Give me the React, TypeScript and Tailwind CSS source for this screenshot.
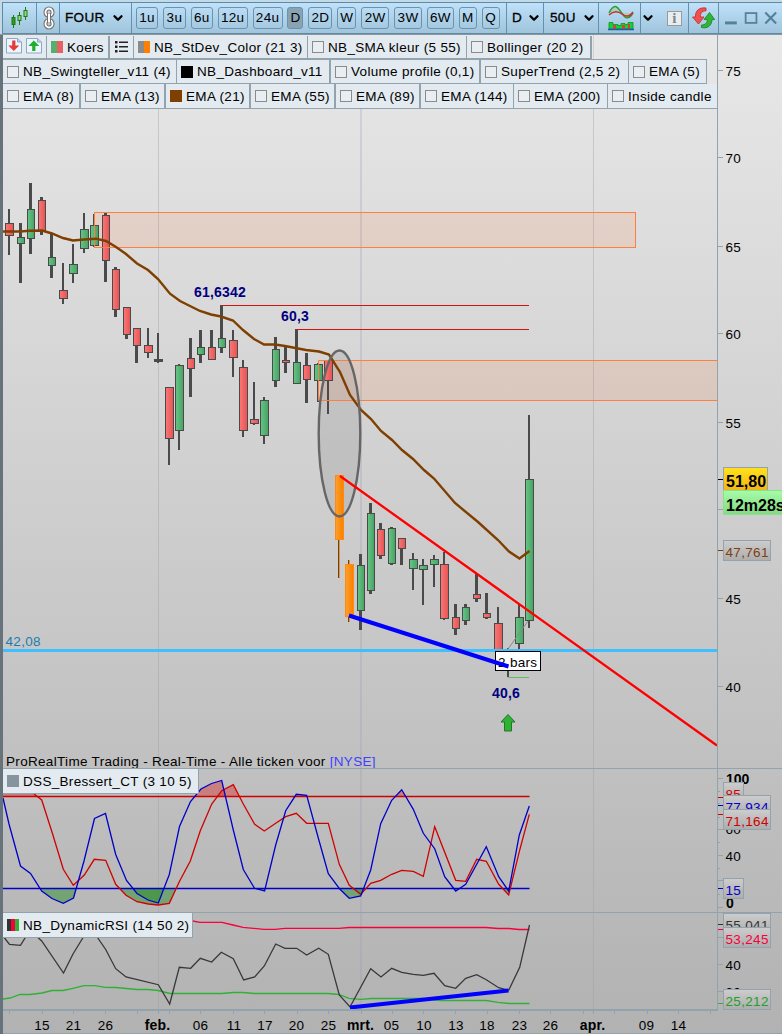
import { ChevronDown } from 'lucide-react';
import type { ReactNode } from 'react';

type Kind = 'up' | 'down' | 'alert' | 'flat';

// bodyX, bodyW, wickX, wickW, high, low, open/close top, open/close bottom, kind
type Candle = [number, number, number, number, number, number, number, number, Kind];

const candles: Candle[] = [
  [5, 9, 8, 2, 209, 255, 223, 236, 'down'],
  [17, 8, 19, 3, 223, 283, 237, 244, 'up'],
  [27, 8, 29, 3, 183, 254, 209, 239, 'up'],
  [38, 8, 40, 3, 197, 235, 200, 232, 'down'],
  [48, 8, 50, 3, 233, 278, 257, 266, 'up'],
  [59, 9, 62, 2, 263, 304, 290, 299, 'down'],
  [69, 9, 72, 2, 244, 283, 264, 274, 'up'],
  [80, 9, 83, 2, 213, 253, 229, 249, 'up'],
  [90, 9, 93, 1, 214, 247, 225, 246, 'up'],
  [102, 8, 104, 3, 213, 282, 215, 261, 'down'],
  [112, 8, 114, 3, 267, 317, 269, 310, 'down'],
  [123, 8, 125, 3, 307, 339, 307, 335, 'down'],
  [133, 8, 135, 3, 328, 363, 328, 346, 'down'],
  [144, 9, 147, 2, 328, 358, 345, 353, 'down'],
  [154, 9, 157, 2, 333, 363, 359, 362, 'flat'],
  [165, 9, 168, 2, 387, 465, 387, 439, 'down'],
  [175, 9, 178, 2, 364, 450, 365, 431, 'up'],
  [187, 8, 189, 3, 338, 397, 358, 369, 'down'],
  [197, 8, 199, 3, 330, 363, 347, 355, 'up'],
  [208, 8, 210, 3, 330, 360, 347, 360, 'down'],
  [218, 8, 220, 3, 305, 353, 338, 348, 'up'],
  [229, 9, 232, 2, 330, 377, 340, 358, 'down'],
  [239, 9, 242, 2, 360, 437, 367, 431, 'down'],
  [250, 9, 253, 2, 382, 425, 419, 424, 'down'],
  [260, 9, 263, 2, 397, 444, 400, 436, 'up'],
  [272, 8, 274, 3, 337, 387, 349, 381, 'up'],
  [282, 8, 284, 3, 347, 373, 360, 363, 'down'],
  [293, 8, 295, 3, 329, 384, 362, 384, 'up'],
  [303, 8, 305, 3, 353, 403, 365, 380, 'down'],
  [314, 9, 317, 2, 363, 402, 364, 381, 'up'],
  [324, 9, 327, 2, 361, 414, 360, 381, 'down'],
  [335, 9, 338, 2, 475, 578, 475, 540, 'alert'],
  [345, 9, 348, 2, 560, 622, 564, 617, 'alert'],
  [357, 8, 359, 3, 554, 630, 565, 611, 'up'],
  [367, 8, 369, 3, 503, 594, 513, 591, 'up'],
  [377, 8, 379, 3, 523, 559, 529, 556, 'down'],
  [388, 8, 390, 3, 527, 565, 528, 564, 'up'],
  [398, 8, 400, 3, 538, 565, 538, 549, 'down'],
  [409, 9, 412, 2, 553, 590, 559, 569, 'up'],
  [419, 9, 422, 2, 559, 605, 565, 570, 'up'],
  [430, 9, 433, 2, 555, 587, 559, 565, 'up'],
  [440, 9, 443, 2, 552, 620, 564, 619, 'down'],
  [452, 8, 454, 3, 604, 635, 617, 629, 'down'],
  [462, 8, 464, 3, 604, 625, 607, 621, 'up'],
  [473, 8, 475, 3, 573, 602, 594, 599, 'down'],
  [483, 8, 485, 3, 593, 619, 613, 618, 'down'],
  [494, 9, 497, 2, 607, 654, 623, 651, 'down'],
  [505, 8, 507, 2, 648, 677, 654, 664, 'up'],
  [515, 9, 518, 2, 604, 649, 617, 644, 'up'],
  [525, 9, 528, 2, 415, 628, 479, 621, 'up'],
];

const ema21 =
  '3,231.5 20,231.5 30,230.7 42,230.5 52,233.5 63,238 73,240.5 84,239.5 96,238.7 106,241 116,247 126,254 137,263.5 148,270 158,279 170,293.7 180,301 190,306 200,311 211,314.5 221,316.5 233,320.5 243,330 254,339 264,344.5 275,344.5 285,346 306,350 319,351.5 329,354.5 340,372 350,395 361,410 371,419 381,431 392,440 402,450 413,459 424,470 434,478.5 455,503 478,522 498,540 509,551.5 519.5,558.5 529.5,551';

const dssFast =
  '3,798 9,824 20.5,866 30.5,873.5 41.7,891 52,898.5 63.3,903.3 73.5,898 84,861 94.5,818.5 105.5,813.5 115.7,854.5 126.5,880.5 137,893.5 148,900 158.3,903 169.3,874.5 179.5,826.5 190.5,801.5 201,789 211.5,783.5 221.7,780.5 233.3,830 243.3,869.5 254.5,888.3 264.6,891 275.7,845 285.7,810.7 296.3,794.3 306.7,795.3 318.3,838 328.3,873.7 340,889.3 349.3,898.3 360.7,896 370.7,870 380.7,823.7 391.7,800.3 401.7,789.7 413.3,809.3 423.3,833.3 434.7,848.7 444.7,876.7 455.7,891 465.7,884.3 486.3,846.7 498.7,876.7 508.7,891 519.3,835 529.3,806';

const dssSlow =
  '3,788 20,788 33.3,793.3 41.7,800 52.3,833 63.3,869.3 73.3,885.3 84.3,875 94.3,859.3 105.7,860.3 115.7,884.3 126,895.3 137,901.7 148.3,904 158.3,905 169.3,903.3 179.3,881.7 190.3,861 200.3,830.7 211.7,804 221.7,790.7 233.3,784.7 243.3,804 254.7,824.3 264.3,831 275.7,823.3 285.7,816.7 296.3,813.3 306.7,823.3 328.3,823.3 339.3,864.3 349.3,885.3 360.7,894.3 370.7,883.3 380.7,880.3 391.7,874.3 401.7,870.3 413.3,871.3 423.3,876.3 434.7,826.7 455.7,880.3 465.7,881.3 476.7,859.3 486.3,861.3 498.7,884.3 508.7,895 519.3,851.7 529.3,814.3';

const rsi =
  '3,936 9.5,944.3 20.5,945.3 30,930 41.7,941 63.5,973 73,954 84,936 95,934 105.7,949.5 115.7,968.7 126,977 158.3,984.7 169.7,1004 179.3,967.3 190.7,968.3 200.3,958.3 211.7,962 221.3,952.3 233.3,958.7 243.7,980 254.7,977 264.3,966 275.7,944 285,948.3 296.7,948.3 306.7,955 318.7,948.3 328.3,954.3 339.3,995 350,1007 370.7,968.7 381,977 391.7,968.3 401.7,972.3 413.3,974.3 423.3,975.3 434,973.3 444.7,985.7 455.7,988.3 465.7,978.3 476.7,974.7 486.3,979.7 498.7,987.7 508.7,990.3 519.7,967.3 529.5,925';

const rsiUpper =
  '190,920.5 200,922.3 222,922.3 233,925 243,927.3 264,929.3 275,929.3 285,928.4 339,928.4 349,927.5 486,927.5 498,928.5 509,928.5 519,929.5 529.5,929.5';

const rsiLower =
  '3,999 10,998 20,994.5 30,994.5 42,993 52,990.5 63,990.5 73,988.3 84,985.7 95,985.7 105,987.3 116,987.5 137,989.5 148,989.5 158,990.5 170,993.5 222,993.5 233,992.5 243,992.5 254,993.5 328,993.5 339,994.5 349,998.3 361,999.3 371,998.5 423,998.5 440,1000.5 486,1000.5 498,1002.3 509,1003.5 529.5,1003.5';

const bodyFill: Record<Kind, string> = {
  up: 'url(#up)',
  down: 'url(#down)',
  alert: 'url(#alert)',
  flat: '#4a4a4a',
};

const timeframes: [string, string][] = [
  ['1u', 'w-[22px]'],
  ['3u', 'w-[23px]'],
  ['6u', 'w-[22px]'],
  ['12u', 'w-[30px]'],
  ['24u', 'w-[30px]'],
  ['D', 'w-[16px]'],
  ['2D', 'w-[24px]'],
  ['W', 'w-[19px]'],
  ['2W', 'w-[28px]'],
  ['3W', 'w-[28px]'],
  ['6W', 'w-[27px]'],
  ['M', 'w-[18px]'],
  ['Q', 'w-[18px]'],
];

const priceTicks: [string, number][] = [
  ['75', 71],
  ['70', 158],
  ['65', 247],
  ['60', 334],
  ['55', 423],
  ['50', 510],
  ['45', 599],
  ['40', 687],
];

const dates: [string, number][] = [
  ['15', 42],
  ['21', 73.5],
  ['26', 105.5],
  ['feb.', 157.5],
  ['06', 200.5],
  ['11', 234],
  ['17', 265],
  ['20', 296.5],
  ['25', 328.5],
  ['mrt.', 360.5],
  ['05', 391.5],
  ['10', 424],
  ['13', 456],
  ['18', 487],
  ['23', 519.5],
  ['26', 550.5],
  ['apr.', 592.5],
  ['09', 646.5],
  ['14', 678.5],
];

const dateTicks = [
  9, 42, 73, 105, 137, 158, 169, 200, 233, 264, 297, 328, 361, 392, 423, 455, 487, 519, 550, 583, 593, 614, 647, 678,
  710,
];

function Swatch({ colors }: { colors?: string[] }) {
  if (!colors) return <span className="h-3 w-3 shrink-0 border border-[#8b8b8b] bg-[#e9eef2]" />;
  return (
    <span className="flex h-3 w-3 shrink-0">
      {colors.map((c) => (
        <span key={c} className={`h-full flex-1 ${c}`} />
      ))}
    </span>
  );
}

function Tag({ label, width, colors }: { label: string; width: string; colors?: string[] }) {
  return (
    <div className={`flex shrink-0 items-center gap-1 border-r border-[#93a3ad] bg-[#e3ebf1] pl-1 ${width}`}>
      <Swatch colors={colors} />
      <span className="pt-px whitespace-nowrap">{label}</span>
    </div>
  );
}

function Cell({ width, children }: { width: string; children?: ReactNode }) {
  return <div className={`flex h-full shrink-0 items-center border-r border-[#6290ad] ${width}`}>{children}</div>;
}

function Caret({ className }: { className?: string }) {
  return <ChevronDown className={className} size={14} strokeWidth={4} />;
}

function PageIcon({ color, up }: { color: string; up?: boolean }) {
  return (
    <svg width="16" height="16" viewBox="0 0 16 16">
      <path d="M.5.5h11l4 3.5v11H.5z" fill="#eef5fb" stroke="#8aa9c8" />
      <path d="M11.5.5v3.5h4" fill="#b9cfe4" stroke="#8aa9c8" />
      <path
        d="M6.2 2.5h3.2v5h3.8L7.8 13 2.3 7.5h3.9z"
        fill={color}
        transform={up ? 'rotate(180 7.8 7.8)' : undefined}
      />
    </svg>
  );
}

function Toolbar() {
  return (
    <header className="flex h-8 items-center border-y border-l border-[#5f8aa6] bg-linear-to-b from-[#bfe1fa] to-[#9fc4dc]">
      <Cell width="w-[34px]">
        <svg className="ml-[7px]" width="20" height="22" viewBox="0 0 20 22">
          <g stroke="#1f7a12" fill="#2f9a1c">
            <path d="M3.5 8v13M9.5 5v13M15.5 0v13" />
            <rect x="2" y="10.5" width="3" height="7" />
            <rect x="8" y="8.5" width="3" height="5" fill="#8fdc80" />
            <rect x="14" y="3.5" width="3" height="6" fill="#8fdc80" />
          </g>
        </svg>
      </Cell>
      <Cell width="w-[23px]">
        <svg className="ml-[6px]" width="12" height="24" viewBox="0 0 12 24" fill="none">
          <g stroke="#77716d" strokeWidth="4">
            <rect x="2.5" y="2.5" width="7" height="7.5" rx="3.5" />
            <rect x="2.5" y="14" width="7" height="7.5" rx="3.5" />
          </g>
          <g stroke="#fff" strokeWidth="1.8">
            <rect x="2.5" y="2.5" width="7" height="7.5" rx="3.5" />
            <rect x="2.5" y="14" width="7" height="7.5" rx="3.5" />
          </g>
          <path d="M6 7v10" stroke="#77716d" strokeWidth="4" />
          <path d="M6 7.5v9" stroke="#fff" strokeWidth="2" />
        </svg>
      </Cell>
      <Cell width="w-[72px]">
        <span className="ml-[5px] [-webkit-text-stroke:0.3px]">FOUR</span>
        <Caret className="ml-[6px]" />
      </Cell>
      <div className="flex w-[374px] shrink-0 items-center gap-[4.9px] pl-[4px]">
        {timeframes.map(([label, width]) => (
          <button
            key={label}
            className={`flex h-[22px] shrink-0 items-center justify-center rounded-[3px] border border-[#6b93ae] ${width} ${
              label === 'D' ? 'bg-[#8aa3b3]' : ''
            }`}
          >
            {label}
          </button>
        ))}
      </div>
      <div className="flex h-full w-[38px] shrink-0 items-center border-x border-[#6290ad]">
        <span className="ml-[5px] [-webkit-text-stroke:0.3px]">D</span>
        <Caret className="ml-[5px]" />
      </div>
      <Cell width="w-[55px]">
        <span className="ml-[6px] [-webkit-text-stroke:0.3px]">50U</span>
        <Caret className="ml-[6px]" />
      </Cell>
      <Cell width="w-[42px]">
        <svg className="ml-[9px]" width="26" height="26" viewBox="0 0 26 26" fill="none">
          <path d="M1 8C6-2 9 1 13 7s7 9 12 1" fill="#a9d3b8" stroke="#2a9d3c" strokeWidth="1.5" />
          <path d="M1 10c5-5 9-4 13-1s8 3 11-2" stroke="#c92f35" strokeWidth="1.5" />
          <path d="M1 24V17.5h4v2h5v1h3v-2h4v1h3v-2h5V24z" fill="#0bd82c" stroke="#119022" strokeWidth=".8" />
          <path d="M5 20h3v4H5zM14 20h3v4h-3zM20 19h2v5h-2z" fill="#e33b3b" />
          <path d="M0 24.5h26" stroke="#1e58b8" strokeWidth="1.5" />
        </svg>
      </Cell>
      <Cell width="w-[48px]">
        <Caret />
        <span className="ml-[12px] flex h-[15px] w-[15px] items-center justify-center border border-[#9a9a9a] bg-[#e8edf0] font-['Liberation_Serif',serif] text-[15px] leading-none font-bold text-[#7e868c]">
          i
        </span>
      </Cell>
      <Cell width="w-[30px]">
        <svg className="ml-[3px]" width="23" height="22" viewBox="0 0 23 22">
          <path d="M14 1C7 0 3 4 3.5 10H.5l6 7 5.5-7H8.500C8 6.500 10 4 14 3.800z" fill="#f2504e" stroke="#c22b2b" strokeWidth=".8" />
          <path d="M9.500 20.500c6 1.500 10.500-2 10.500-8h2.700L17.500 5.500 12 12.500h3.200c.3 3-1.700 5.500-5.700 5.500z" fill="#2fb636" stroke="#18801f" strokeWidth=".8" />
        </svg>
      </Cell>
      <svg className="ml-[6px]" width="58" height="18" viewBox="0 0 58 18" fill="none" stroke="#55809b" strokeWidth="2.2">
        <path d="M0 14h12" strokeWidth="3" />
        <rect x="21" y="4" width="11" height="10" strokeWidth="1.8" />
        <path d="M41 3.5l11 11M52 3.5l-11 11" />
      </svg>
    </header>
  );
}

function IndicatorTags() {
  return (
    <div className="absolute top-[1px] left-[3px] flex flex-col">
      <div className="flex h-[23px] w-fit border-r border-b border-[#93a3ad]">
        <div className="flex w-[44px] gap-1 border-r border-[#93a3ad] bg-[#e3ebf1] pt-[2px] pl-[3px]">
          <PageIcon color="#e63b3b" />
          <PageIcon color="#22ad2c" up />
        </div>
        <Tag label="Koers" width="w-[63px] border-r-2" colors={['bg-[#55b070]', 'bg-[#ea6060]']} />
        <div className="flex w-[24px] items-center border-r border-[#93a3ad] bg-[#e3ebf1] pl-[5px]">
          <svg width="13" height="12" viewBox="0 0 13 12" fill="#222">
            <path d="M0 0h2.5v2.5H0zM0 4.5h2.5V7H0zM0 9h2.5v2.5H0zM4 .5h9V2H4zM4 5h9v1.5H4zM4 9.5h9V11H4z" />
          </svg>
        </div>
        <Tag label="NB_StDev_Color (21 3)" width="w-[174px]" colors={['bg-[#8b8b8b]', 'bg-[#ff7f00]']} />
        <Tag label="NB_SMA kleur (5 55)" width="w-[159px]" />
        <Tag label="Bollinger (20 2)" width="w-[124px]" />
      </div>
      <div className="flex h-[25px] w-fit border-y border-[#93a3ad]">
        <Tag label="NB_Swingteller_v11 (4)" width="w-[174px]" />
        <Tag label="NB_Dashboard_v11" width="w-[154px] border-r-2" colors={['bg-black']} />
        <Tag label="Volume profile (0,1)" width="w-[150px] border-r-2" />
        <Tag label="SuperTrend (2,5 2)" width="w-[148px]" />
        <Tag label="EMA (5)" width="w-[78px]" />
      </div>
      <div className="flex h-[25px] w-fit border-b border-[#93a3ad]">
        <Tag label="EMA (8)" width="w-[78px] border-r-2" />
        <Tag label="EMA (13)" width="w-[85px] border-r-2" />
        <Tag label="EMA (21)" width="w-[85px] border-r-2" colors={['bg-[#7f3f00]']} />
        <Tag label="EMA (55)" width="w-[85px] border-r-2" />
        <Tag label="EMA (89)" width="w-[85px] border-r-2" />
        <Tag label="EMA (144)" width="w-[93px]" />
        <Tag label="EMA (200)" width="w-[94px]" />
        <Tag label="Inside candle" width="w-[110px]" />
      </div>
    </div>
  );
}

function Candles() {
  return (
    <g shapeRendering="crispEdges">
      {candles.map(([x, w, wx, ww, high, low, top, bottom, kind]) => (
        <g key={x}>
          <rect x={wx} y={high} width={ww} height={low - high} fill="#4a4a4a" />
          {kind === 'alert' && <rect x={wx + 1} y={high} width={1} height={low - high} fill="#ff8a10" />}
          <rect
            x={x + 0.5}
            y={top + 0.5}
            width={w - 1}
            height={bottom - top - 1}
            fill={bodyFill[kind]}
            stroke={kind === 'alert' ? '#ff8a10' : '#4a4a4a'}
          />
        </g>
      ))}
    </g>
  );
}

function ValueBox({ y, text, color, w = 48 }: { y: number; text: string; color: string; w?: number }) {
  return (
    <g>
      <rect x="723.5" y={y + 0.5} width={w - 1} height={20} fill="url(#box)" stroke="#93a3ad" />
      <text x="725.5" y={y + 17} fill={color}>
        {text}
      </text>
    </g>
  );
}

function Axis() {
  return (
    <g>
      <path d="M717.5 35V1010" stroke="#93a3ab" />
      <path d="M3 768.5H782M3 912.5H782M3 1033.5H782" stroke="#93a3ab" />
      <path d="M3 1010H718" stroke="#93a3ab" strokeWidth="2" />
      {priceTicks.map(([label, y]) => (
        <g key={label}>
          <path d={`M718 ${y - 0.5}h5`} stroke="#93a3ab" />
          <text x="725.5" y={y + 5}>
            {label}
          </text>
        </g>
      ))}
      <path
        d="M718 778.5h5M718 829.5h5M718 855.5h5M718 880.5h5M718 907.5h5M718 791.5h2M718 803.5h2M718 817.5h2M718 842.5h2M718 868.5h2M718 894.5h2M718 937.5h5M718 964.5h5M718 991.5h5"
        stroke="#93a3ab"
      />
      <path d="M718 479.5h5" stroke="#000" />
      <path d="M718 550.5h5" stroke="#7f3f00" />
      <path d="M718 797.5h5M718 814.5h5" stroke="#d00000" />
      <path d="M718 805.5h5M718 888.5h5" stroke="#0000c8" />
      <path d="M718 924.5h5" stroke="#333" />
      <path d="M718 929.5h5" stroke="#f8003c" />
      <path d="M718 1003.5h5" stroke="#2eb135" />

      <rect x="723.5" y="467.5" width="44" height="24" fill="url(#last)" stroke="#93a3ad" />
      <text x="726" y="487" className="text-[16px] font-bold tracking-normal">
        51,80
      </text>
      <rect x="723.5" y="490.5" width="62" height="24" fill="url(#timer)" stroke="#8be08b" />
      <text x="726" y="511" className="text-[16px] font-bold tracking-normal">
        12m28s
      </text>
      <ValueBox y={540} text="47,761" color="#7f4010" />

      <text x="726" y="783.5" className="text-[14px] font-bold tracking-normal">
        100
      </text>
      <text x="725.5" y="834">
        60
      </text>
      <text x="725.5" y="861">
        40
      </text>
      <text x="725.5" y="887">
        20
      </text>
      <text x="726" y="908" className="text-[14px] font-bold">
        0
      </text>
      <ValueBox y={782} text="85" color="#d00000" w={21} />
      <ValueBox y={795} text="77,934" color="#0000c8" />
      <ValueBox y={809} text="71,164" color="#d00000" />
      <ValueBox y={878} text="15" color="#0000c8" w={21} />

      <text x="725.5" y="970">
        40
      </text>
      <text x="725.5" y="997">
        30
      </text>
      <ValueBox y={913} text="55,041" color="#333" />
      <ValueBox y={927} text="53,245" color="#f8003c" />
      <ValueBox y={989} text="25,212" color="#1f9f28" />

      {dateTicks.map((x) => (
        <path key={x} d={`M${x + 0.5} 1011v3`} stroke="#93a3ab" />
      ))}
      {dates.map(([label, x]) => (
        <text
          key={x}
          x={x}
          y="1030"
          textAnchor="middle"
          className={label.endsWith('.') ? 'text-[14px] font-bold tracking-[0.2px]' : ''}
        >
          {label}
        </text>
      ))}
    </g>
  );
}

function Chart() {
  return (
    <svg className="block" width="782" height="999" viewBox="0 35 782 999" fill="none">
      <defs>
        <linearGradient id="up">
          <stop offset="0" stopColor="#66c686" />
          <stop offset="1" stopColor="#46a263" />
        </linearGradient>
        <linearGradient id="down">
          <stop offset="0" stopColor="#fb7777" />
          <stop offset="1" stopColor="#e45454" />
        </linearGradient>
        <linearGradient id="alert">
          <stop offset="0" stopColor="#ffa02a" />
          <stop offset="1" stopColor="#f87f00" />
        </linearGradient>
        <linearGradient id="box" x2="0" y2="1">
          <stop offset="0" stopColor="#cdcdcd" />
          <stop offset="1" stopColor="#adadad" />
        </linearGradient>
        <linearGradient id="last" x2="0" y2="1">
          <stop offset="0" stopColor="#ffe21c" />
          <stop offset="1" stopColor="#f0b414" />
        </linearGradient>
        <linearGradient id="timer" x2="0" y2="1">
          <stop offset="0" stopColor="#a6fca6" />
          <stop offset="1" stopColor="#84d984" />
        </linearGradient>
        <clipPath id="overbought">
          <rect x="3" y="769" width="527" height="27.5" />
        </clipPath>
        <clipPath id="oversold">
          <rect x="3" y="888.5" width="527" height="23" />
        </clipPath>
      </defs>

      {/* month separators */}
      <path d="M158.5 108V1009M593.5 108V1009" stroke="#9a9ab0" strokeOpacity=".4" />
      <path d="M593.5 35V60" stroke="#9a9ab0" strokeOpacity=".3" />
      <path d="M361 108V1009" stroke="#9a9ab0" strokeOpacity=".28" strokeWidth="2" />

      {/* supply zones and gap marker */}
      <rect x="94" y="212" width="542" height="35" fill="#ff7f40" fillOpacity=".15" />
      <rect x="318" y="360" width="399" height="40" fill="#ff7f40" fillOpacity=".15" />
      <ellipse cx="339.5" cy="433.5" rx="20.8" ry="83" fill="#666" fillOpacity=".15" />
      <Candles />
      <rect x="94.5" y="212.5" width="541" height="35" stroke="#ff7f40" />
      <path d="M717 360.5H318.5V400.5H717" stroke="#ff7f40" />
      <path d="M222 305.5H529M296 329.5H529" stroke="#d4120e" />
      <polyline points={ema21} stroke="#7f3f00" strokeWidth="2.4" />
      <ellipse cx="339.5" cy="433.5" rx="20.8" ry="83" stroke="#666" strokeWidth="2.4" />

      <path d="M3 650.5H717" stroke="#40bfff" strokeWidth="3" />
      <path d="M508 649L528 621" stroke="#888" />
      <path d="M508 677.5H529" stroke="#5cc05c" />
      <rect x="495.5" y="651.5" width="45" height="19" fill="#fff" stroke="#000" />
      <text x="498" y="667" fill="#000">
        2 bars
      </text>
      <path d="M340 476L717 745.5" stroke="#f00" strokeWidth="2.3" />
      <path d="M349 615.5L508.5 666.5" stroke="#00f" strokeWidth="4" />
      <path d="M508 714.5l7 7.5h-3.5v9h-7v-9h-3.5z" fill="#2eb135" stroke="#1c7a22" />

      <g fill="#000080" className="text-[14px] font-bold tracking-[0.2px]">
        <text x="194" y="297">
          61,6342
        </text>
        <text x="281" y="320.5">
          60,3
        </text>
        <text x="492" y="697.5">
          40,6
        </text>
      </g>
      <text x="5.5" y="646" fill="#1c7cae">
        42,08
      </text>
      <text x="6" y="766" fill="#000">
        ProRealTime Trading - Real-Time - Alle ticken voor <tspan fill="#4040ff">[NYSE]</tspan>
      </text>

      {/* DSS Bressert */}
      <g clipPath="url(#overbought)" fill="#d83030" fillOpacity=".45">
        <path d={`M3 912 L${dssFast} L529.3 912z`} />
        <path d={`M3 912 L${dssSlow} L529.3 912z`} />
      </g>
      <g clipPath="url(#oversold)" fill="#1f8a1f" fillOpacity=".45">
        <path d={`M3 769 L${dssFast} L529.3 769z`} />
        <path d={`M3 769 L${dssSlow} L529.3 769z`} />
      </g>
      <path d="M3 796.5H529.5" stroke="#d00000" strokeWidth="1.3" />
      <path d="M3 888.5H529.5" stroke="#0000c8" strokeWidth="1.3" />
      <polyline points={dssSlow} stroke="#d00000" strokeWidth="1.3" />
      <polyline points={dssFast} stroke="#0000c8" strokeWidth="1.3" />

      {/* dynamic RSI */}
      <polyline points={rsiUpper} stroke="#f8003c" strokeWidth="1.3" />
      <polyline points={rsiLower} stroke="#2eb135" strokeWidth="1.3" />
      <polyline points={rsi} stroke="#383838" strokeWidth="1.3" />
      <path d="M350 1007.5L508.5 990.5" stroke="#00f" strokeWidth="4" />

      <g fill="#000">
        <Axis />
      </g>
    </svg>
  );
}

export default function App() {
  return (
    <div className="flex h-[1034px] w-[782px] flex-col overflow-hidden bg-[#c3d9e6] pt-[2px] font-['Liberation_Sans',Arial,sans-serif] text-[13.5px] leading-none tracking-[0.32px] text-black">
      <div className="pl-[2px]">
        <Toolbar />
      </div>
      <main className="relative h-[1000px] border-t border-[#8798a3] bg-linear-to-b from-[#e8e8e8] to-[#b2b2b2]">
        <Chart />
        <div className="absolute inset-y-0 left-0 w-[3px] bg-[#66737b]" />
        <IndicatorTags />
        <div className="absolute top-[734px] left-[3px] flex h-[25px] border-b border-[#93a3ad]">
          <Tag label="DSS_Bressert_CT (3 10 5)" width="w-[196px]" colors={['bg-[#86959d]']} />
        </div>
        <div className="absolute top-[878px] left-[3px] flex h-[25px] border-b border-[#93a3ad]">
          <Tag
            label="NB_DynamicRSI (14 50 2)"
            width="w-[190px]"
            colors={['bg-[#333333]', 'bg-[#f8003c]', 'bg-[#2eb135]']}
          />
        </div>
      </main>
    </div>
  );
}
